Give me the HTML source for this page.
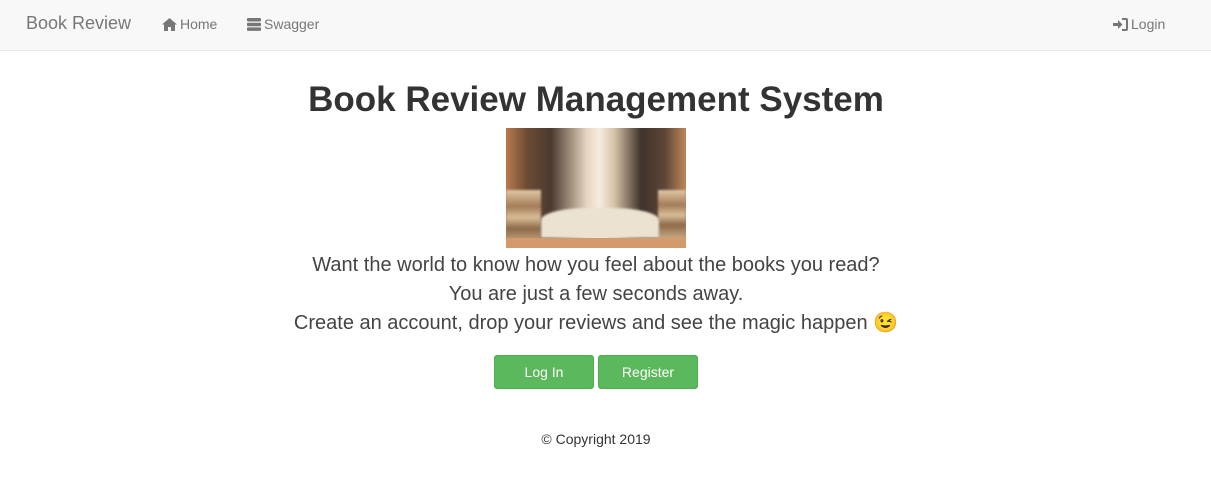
<!DOCTYPE html>
<html><head><meta charset="utf-8"><style>
body{margin:0;background:#fff;font-family:"Liberation Sans",sans-serif;color:#333;width:1211px;height:478px;overflow:hidden}
.nav{height:50px;background:#f8f8f8;border-bottom:1px solid #e7e7e7;position:relative;color:#777}
.brand{position:absolute;left:26px;top:13px;font-size:18px}
.nl{position:absolute;top:16px;font-size:14px;display:flex;align-items:center;gap:3px}
h1{margin:0;position:absolute;top:80px;width:1192px;text-align:center;font-size:35px;font-weight:bold;color:#333}
.img{position:absolute;left:506px;top:128px;width:180px;height:120px;overflow:hidden;
background:linear-gradient(90deg,#b87a4e 0%,#6b4a34 12%,#4a3a30 25%,#e7d6c0 45%,#f5ece0 52%,#d9c3a8 60%,#3f332c 75%,#5b4536 88%,#c08658 100%)}
.txt{position:absolute;top:251px;width:1192px;text-align:center;font-size:20px;line-height:29px;color:#444}
.btn{position:absolute;top:355px;width:98px;height:32px;background:#5cb85c;border:1px solid #4cae4c;border-radius:3px;color:#fff;font-size:14px;text-align:center;line-height:32px}
.copy{position:absolute;top:431px;width:1192px;text-align:center;font-size:14px;color:#333}
</style></head><body>
<div class="nav">
<div class="brand">Book Review</div>
<div class="nl" style="left:162px"><svg width="15" height="13" viewBox="0 0 15 13"><path d="M7.5 0L0 6.5h2V13h4V9h3v4h4V6.5h2z" fill="#777"/></svg>Home</div>
<div class="nl" style="left:247px"><svg width="14" height="13" viewBox="0 0 14 13"><rect x="0" y="0" width="14" height="3.5" rx="1" fill="#777"/><rect x="0" y="4.7" width="14" height="3.5" rx="1" fill="#777"/><rect x="0" y="9.4" width="14" height="3.5" rx="1" fill="#777"/></svg>Swagger</div>
<div class="nl" style="left:1113px"><svg width="15" height="13" viewBox="0 0 15 13"><path d="M0 5h5V2l4.5 4.5L5 11V8H0z" fill="#777"/><path d="M9 1h4a1 1 0 0 1 1 1v9a1 1 0 0 1-1 1H9" fill="none" stroke="#777" stroke-width="2"/></svg>Login</div>
</div>
<h1>Book Review Management System</h1>
<div class="img">
<div style="position:absolute;left:0;top:62px;width:35px;height:55px;filter:blur(1px);background:linear-gradient(#e0c9a8,#a47c57 30%,#d8bd98 50%,#8d6a48 70%,#cfb08a)"></div>
<div style="position:absolute;right:0;top:62px;width:28px;height:50px;filter:blur(1px);background:linear-gradient(#e0c9a8,#a47c57 30%,#d8bd98 50%,#8d6a48 70%,#cfb08a)"></div>
<div style="position:absolute;left:35px;top:80px;width:118px;height:30px;background:#ece2d2;border-radius:40% 40% 0 0;filter:blur(1px)"></div>
<div style="position:absolute;left:0;top:110px;width:180px;height:10px;background:#d39a6c"></div>
</div>
<div class="txt">Want the world to know how you feel about the books you read?<br>You are just a few seconds away.<br>Create an account, drop your reviews and see the magic happen 😉</div>
<div class="btn" style="left:494px">Log In</div>
<div class="btn" style="left:598px">Register</div>
<div class="copy">© Copyright 2019</div>
</body></html>
